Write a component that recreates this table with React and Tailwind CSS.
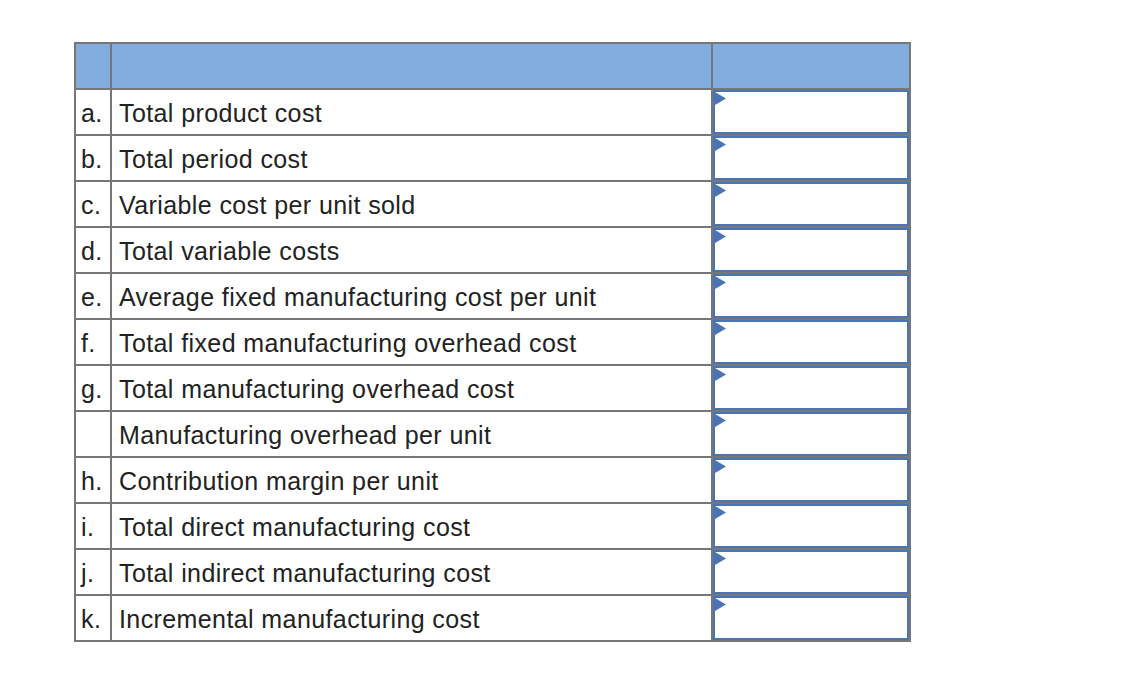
const rows = [
  ["a.", "Total product cost"],
  ["b.", "Total period cost"],
  ["c.", "Variable cost per unit sold"],
  ["d.", "Total variable costs"],
  ["e.", "Average fixed manufacturing cost per unit"],
  ["f.", "Total fixed manufacturing overhead cost"],
  ["g.", "Total manufacturing overhead cost"],
  ["", "Manufacturing overhead per unit"],
  ["h.", "Contribution margin per unit"],
  ["i.", "Total direct manufacturing cost"],
  ["j.", "Total indirect manufacturing cost"],
  ["k.", "Incremental manufacturing cost"],
];

function InputCell() {
  return (
    <div className="relative w-[198px] h-[46px] border-r-2 border-b-2 border-[#777777]">
      <div className="relative w-full h-full border-2 border-[#4a74b6] bg-white">
        <svg className="absolute left-0 top-0" width="11" height="13" viewBox="0 0 11 13">
          <polygon points="0,0 11,6.5 0,13" fill="#4a74b6" />
        </svg>
      </div>
    </div>
  );
}

export default function App() {
  return (
    <div className="w-full min-h-screen bg-white pt-[42px] pl-[74px] font-['Liberation_Sans',Arial,sans-serif] text-[25px] tracking-[0.4px] text-[#222222]">
      <div className="w-[837px] border-l-2 border-t-2 border-[#777777]">
        <div className="flex bg-[#83addf]">
          <div className="w-[36px] h-[46px] border-r-2 border-b-2 border-[#777777]" />
          <div className="w-[601px] h-[46px] border-r-2 border-b-2 border-[#777777]" />
          <div className="w-[198px] h-[46px] border-r-2 border-b-2 border-[#777777]" />
        </div>
        {rows.map(([label, text]) => (
          <div className="flex" key={text}>
            <div className="w-[36px] h-[46px] border-r-2 border-b-2 border-[#777777] pl-[5px] pt-[3px] flex items-center">
              {label}
            </div>
            <div className="w-[601px] h-[46px] border-r-2 border-b-2 border-[#777777] pl-[7px] pt-[3px] flex items-center whitespace-nowrap">
              {text}
            </div>
            <InputCell />
          </div>
        ))}
      </div>
    </div>
  );
}
